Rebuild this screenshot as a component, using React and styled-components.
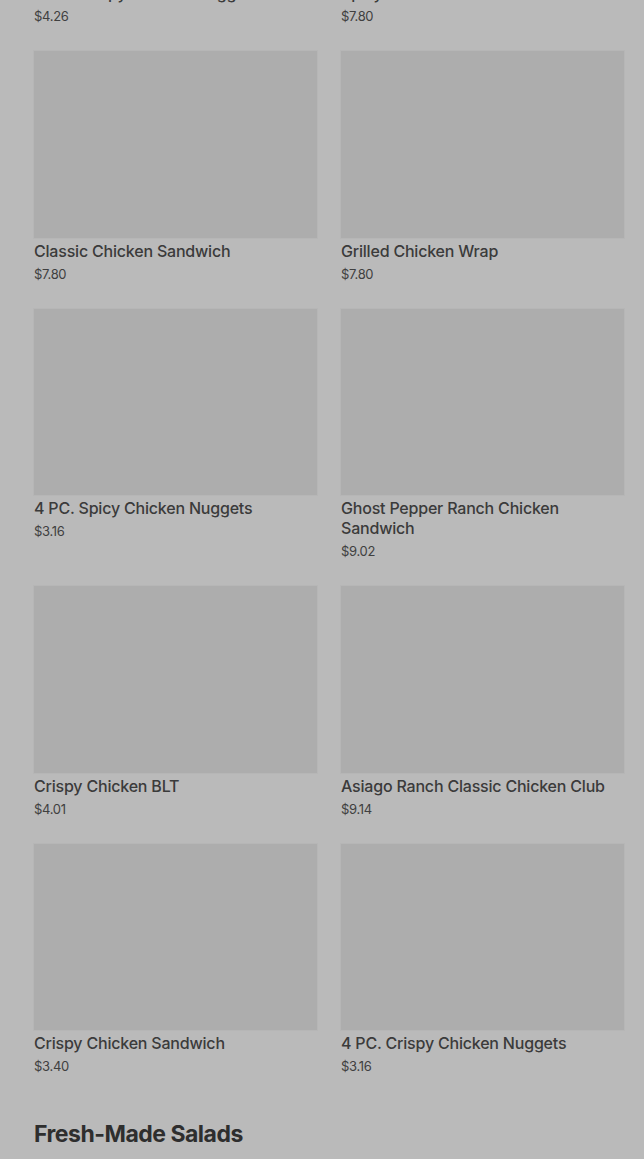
import styled, { createGlobalStyle } from "styled-components"

const Global = createGlobalStyle`
    html, body {
        margin:0;
        padding:0;
        background:#bababa;
        font-family:"Inter", "Liberation Sans", sans-serif;
        overflow:hidden;
    }
`

const Page = styled.div`
    margin-top:-206.5px;
    padding:0 20px 0 34px;
`

const Grid = styled.div`
    display:grid;
    grid-template-columns:1fr 1fr;
    column-gap:24px;
    row-gap:25px;
`

const Card = styled.div`
    display:flex;
    flex-direction:column;
`

const Photo = styled.div`
    height:186.5px;
    background-color:#adadad;
    box-shadow:0 0 0 1px #b6b6b6;
`

const Name = styled.div`
    margin-top:3px;
    font-size:16px;
    line-height:20px;
    font-weight:500;
    color:#3b3b3b;
    letter-spacing:-0.2px;
`

const Price = styled.div`
    margin-top:3px;
    font-size:13px;
    line-height:20px;
    color:#404040;
    letter-spacing:-0.3px;
`

const Section = styled.h2`
    margin:43px 0 0;
    font-size:23px;
    line-height:30px;
    font-weight:700;
    color:#2e2e2e;
    letter-spacing:-0.5px;
`

const items = [
    ["8 PC. Crispy Chicken Nuggets", "$4.26"],
    ["Spicy Chicken Sandwich", "$7.80"],
    ["Classic Chicken Sandwich", "$7.80"],
    ["Grilled Chicken Wrap", "$7.80"],
    ["4 PC. Spicy Chicken Nuggets", "$3.16"],
    ["Ghost Pepper Ranch Chicken Sandwich", "$9.02"],
    ["Crispy Chicken BLT", "$4.01"],
    ["Asiago Ranch Classic Chicken Club", "$9.14"],
    ["Crispy Chicken Sandwich", "$3.40"],
    ["4 PC. Crispy Chicken Nuggets", "$3.16"],
]

const App = () => {
    return (
        <>
            <Global />
            <Page>
                <Grid>
                    {items.map(([name, price], i) => (
                        <Card key={i}>
                            <Photo />
                            <Name>{name}</Name>
                            <Price>{price}</Price>
                        </Card>
                    ))}
                </Grid>
                <Section>Fresh-Made Salads</Section>
            </Page>
        </>
    )
}

export default App
